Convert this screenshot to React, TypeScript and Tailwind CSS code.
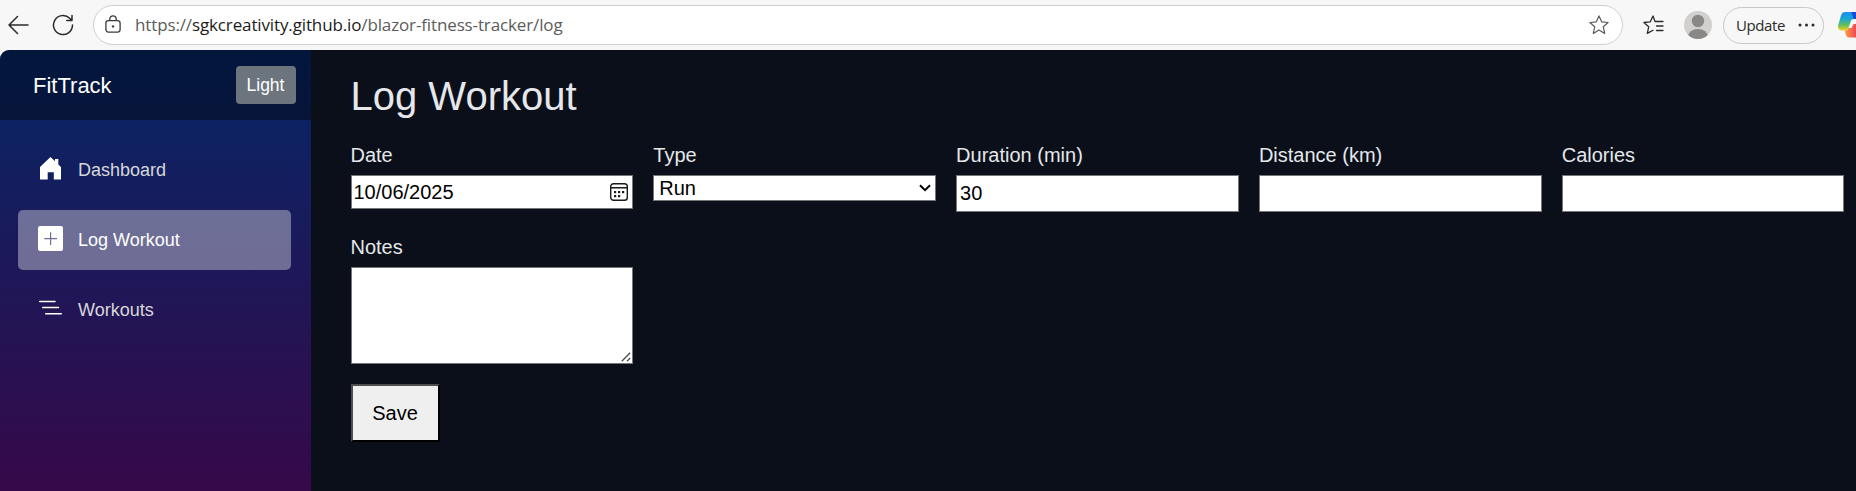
import React from "react";

const fieldClass =
  "block w-full rounded-none border border-[#767676] bg-white px-[3px] text-[20px] leading-[24px] text-black outline-none";

function BrowserBar() {
  return (
    <header className="relative flex h-[50px] shrink-0 items-center bg-[#f7f7f7]">
      <svg className="ml-[8px] mt-[-1px] h-[20px] w-[21px] shrink-0" viewBox="0 0 21 20" fill="none" stroke="#2b2b2b" strokeWidth="1.5" strokeLinecap="round" strokeLinejoin="round">
        <path d="M20 10H1M9.500 1.500L1 10l8.500 8.500" />
      </svg>
      <svg className="ml-[23px] mt-[-1px] h-[22px] w-[22px] shrink-0" viewBox="0 0 22 22" fill="none" stroke="#2b2b2b" strokeWidth="1.5" strokeLinecap="round" strokeLinejoin="round">
        <path d="M20.500 11A9.500 9.500 0 1 1 17.700 4.300L19.700 6.200M20 1.500V6.500H14.800" />
      </svg>
      <div className="ml-[19px] mt-[-1px] flex h-[40px] w-[1530px] shrink-0 items-center rounded-full border border-[#cfcfcf] bg-white">
        <svg className="ml-[11px] mt-[-2px] h-[18px] w-[16px] shrink-0" viewBox="0 0 16 18" fill="none" stroke="#3b3b3b" strokeWidth="1.3">
          <rect x="0.900" y="5.700" width="14.200" height="11.400" rx="2.500" />
          <path d="M4.800 5.500V4a3.200 3.200 0 0 1 6.400 0v1.500" />
          <circle cx="8" cy="11.400" r="1.200" fill="#3b3b3b" stroke="none" />
        </svg>
        <span className="ml-[14px] whitespace-nowrap font-['Open_Sans','Noto_Sans',sans-serif] text-[17px] tracking-[-0.13px] text-[#5c5c5c]">
          https://<span className="text-[#1b1b1b]">sgkcreativity.github.io</span>/blazor-fitness-tracker/log
        </span>
        <svg className="ml-auto mr-[13px] h-[20px] w-[20px] shrink-0" viewBox="0 0 20 20" fill="none" stroke="#5a5a5a" strokeWidth="1.200" strokeLinejoin="round">
          <path d="M10 .9l2.700 5.900 6.400.7-4.800 4.300 1.400 6.600L10 15.100l-5.700 3.300 1.400-6.600L.9 7.500l6.400-.7z" />
        </svg>
      </div>
      <svg className="ml-[20px] h-[20px] w-[21px] shrink-0" viewBox="0 0 21 20" fill="none" stroke="#2b2b2b" strokeWidth="1.300" strokeLinejoin="round" strokeLinecap="round">
        <path d="M12 6.500L10 1 7.300 6.800.9 7.500l4.800 4.300-1.400 6.600L10 15.200M12 6.500h8M13.500 11H20M13.500 15.500H20" />
      </svg>
      <svg className="ml-[20px] h-[28px] w-[28px] shrink-0" viewBox="0 0 28 28">
        <defs>
          <clipPath id="avatar"><circle cx="14" cy="14" r="14" /></clipPath>
        </defs>
        <g clipPath="url(#avatar)">
          <rect width="28" height="28" fill="#d2d0ce" />
          <circle cx="14" cy="10" r="6.200" fill="#8a8886" />
          <ellipse cx="14" cy="26" rx="10" ry="8" fill="#8a8886" />
        </g>
      </svg>
      <div className="ml-[11px] flex h-[37px] w-[101px] shrink-0 items-center rounded-full border border-[#c8c8c8] pl-[12px]">
        <span className="font-['Open_Sans','Noto_Sans',sans-serif] text-[15px] tracking-[-0.4px] text-[#2b2b2b]">Update</span>
        <svg className="ml-[13px] h-[4px] w-[17px]" viewBox="0 0 17 4" fill="#2b2b2b">
          <circle cx="2" cy="2" r="1.500" /><circle cx="8.500" cy="2" r="1.500" /><circle cx="15" cy="2" r="1.500" />
        </svg>
      </div>
      <CopilotIcon />
    </header>
  );
}

function CopilotIcon() {
  return (
    <svg className="ml-[14px] h-[26px] w-[18px] shrink-0" viewBox="0 0 18 26">
      <defs>
        <linearGradient id="cpa" x1="0" y1="0" x2="0" y2="1">
          <stop offset="0" stopColor="#1e8df0" /><stop offset=".35" stopColor="#16a5d8" /><stop offset=".7" stopColor="#5fbf5d" /><stop offset="1" stopColor="#f4d01d" />
        </linearGradient>
        <linearGradient id="cpb" x1="0" y1="0" x2="1" y2="0">
          <stop offset="0" stopColor="#ff9a3a" /><stop offset="1" stopColor="#ee4b5a" />
        </linearGradient>
      </defs>
      <path d="M7.500 0H18v7h-2c-2 0-3 1-3.700 3.500L10.500 16c-.7 2-1.500 2.500-3.500 2.500H3.500C0 18.500-.5 15.500.5 12L3 3.500C3.800 1 5 0 7.500 0z" fill="url(#cpa)" />
      <path d="M13.500 0H18v7h-2.500z" fill="#1c4bd1" />
      <path d="M7 18.500c2 0 3-.5 3.500-2.500h3l2-4H18v13.500h-7c-2.500 0-3.500-3-4-7z" fill="url(#cpb)" />
    </svg>
  );
}

function NavItem({ label, active, children }: { label: string; active?: boolean; children: React.ReactNode }) {
  return (
    <a
      className={
        "flex h-[60px] items-center rounded-[5px] pl-[20px] text-[18px] " +
        (active ? "bg-[rgba(255,255,255,0.37)] text-white" : "text-[#d7d7d7]")
      }
    >
      <span className="mr-[15px] mt-[-3px] h-[25px] w-[25px] shrink-0">{children}</span>
      {label}
    </a>
  );
}

function Sidebar() {
  return (
    <aside className="flex w-[311px] shrink-0 flex-col bg-[linear-gradient(180deg,rgb(5,39,103)_0px,#3a0647_478px)]">
      <div className="flex h-[70px] items-center justify-between bg-black/40 pl-[33px] pr-[15px]">
        <span className="text-[22px] text-white">FitTrack</span>
        <button className="h-[38px] w-[60px] rounded-[4px] bg-[#6c757d] pr-px text-[17.5px] text-white">Light</button>
      </div>
      <nav className="mt-[20px] flex flex-col gap-[10px] pl-[18px] pr-[20px]">
        <NavItem label="Dashboard">
          <svg viewBox="0 0 25 25" className="h-full w-full" fill="#fff">
            <path d="M12.500 1l4.500 4.300V3h3.300v5.400L23 11v12.500h-7.200v-7.200H9.700v7.200H2V11z" />
          </svg>
        </NavItem>
        <NavItem label="Log Workout" active>
          <svg viewBox="0 0 25 25" className="h-full w-full">
            <path fill="#fff" fillRule="evenodd" d="M2 0h21a2 2 0 0 1 2 2v21a2 2 0 0 1-2 2H2a2 2 0 0 1-2-2V2a2 2 0 0 1 2-2zM12 6.300V12H6.300v1.200H12V19h1.200v-5.800H19V12h-5.800V6.300z" />
          </svg>
        </NavItem>
        <NavItem label="Workouts">
          <svg viewBox="0 0 25 25" className="h-full w-full" stroke="#fff" strokeWidth="1.500" strokeLinecap="round">
            <path d="M1.700 5.500H17M4.700 11.500H20.500M7.700 17.800H23.300" />
          </svg>
        </NavItem>
      </nav>
    </aside>
  );
}

function Field({ label, children }: { label: string; children: React.ReactNode }) {
  return (
    <label className="flex flex-col gap-[5px]">
      <span className="text-[20px] leading-[30px]">{label}</span>
      {children}
    </label>
  );
}

function LogForm() {
  return (
    <main className="min-w-0 flex-1 bg-[#0b0f19] pl-[39.5px] pr-[11.5px] pt-[22px] text-[#e5e7eb]">
      <h1 className="mb-[20px] text-[40px] leading-[48px]">Log Workout</h1>
      <div className="grid grid-cols-5 gap-[20px]">
        <Field label="Date">
          <div className="flex h-[34px] items-center border border-[#767676] bg-white pl-[2px] pr-[4px]">
            <input className="min-w-0 flex-1 bg-white text-[20px] leading-[24px] text-black outline-none" defaultValue="10/06/2025" />
            <svg className="h-[18px] w-[18px] shrink-0" viewBox="0 0 18 18" fill="none" stroke="#1b1b1b" strokeWidth="1.400">
              <rect x=".7" y=".7" width="16.600" height="16.600" rx="2.800" />
              <path d="M.7 4.800h16.600" />
              <g fill="#1b1b1b" stroke="none">
                <rect x="4" y="8" width="2.200" height="2.200" /><rect x="8" y="8" width="2.200" height="2.200" /><rect x="12" y="8" width="2.200" height="2.200" />
                <rect x="4" y="12" width="2.200" height="2.200" /><rect x="8" y="12" width="2.200" height="2.200" />
              </g>
            </svg>
          </div>
        </Field>
        <Field label="Type">
          <div className="flex h-[26px] items-center border border-[#767676] bg-white pl-[5px] pr-[4px]">
            <select className="min-w-0 flex-1 appearance-none bg-white text-[20px] leading-[24px] text-black outline-none" defaultValue="Run">
              <option>Run</option>
            </select>
            <svg className="h-[8px] w-[12px] shrink-0" viewBox="0 0 12 8" fill="none" stroke="#000" strokeWidth="2">
              <path d="M1 1.200l5 5 5-5" />
            </svg>
          </div>
        </Field>
        <Field label="Duration (min)"><input className={fieldClass + " h-[37px]"} defaultValue="30" /></Field>
        <Field label="Distance (km)"><input className={fieldClass + " h-[37px]"} /></Field>
        <Field label="Calories"><input className={fieldClass + " h-[37px]"} /></Field>
        <Field label="Notes">
          <div className="relative">
            <textarea className={fieldClass + " h-[97px] resize-none"} />
            <svg className="pointer-events-none absolute bottom-[2px] right-[2px] h-[10px] w-[10px]" viewBox="0 0 10 10" stroke="#4a4a4a" strokeWidth="1.300">
              <path d="M.8 9.200L9.200.8M6 9.200L9.200 6" />
            </svg>
          </div>
        </Field>
      </div>
      <button className="mt-[20px] h-[58px] w-[89px] border-2 border-b-black border-l-[#4d4d4d] border-r-black border-t-[#4d4d4d] bg-[#efefef] text-[20px] text-black">
        Save
      </button>
    </main>
  );
}

export default function App() {
  return (
    <div className="flex h-[491px] w-[1856px] flex-col overflow-hidden bg-[#f7f7f7] font-['Liberation_Sans',Arial,sans-serif]">
      <BrowserBar />
      <div className="flex min-h-0 flex-1 overflow-hidden rounded-tl-[9px]">
        <Sidebar />
        <LogForm />
      </div>
    </div>
  );
}
